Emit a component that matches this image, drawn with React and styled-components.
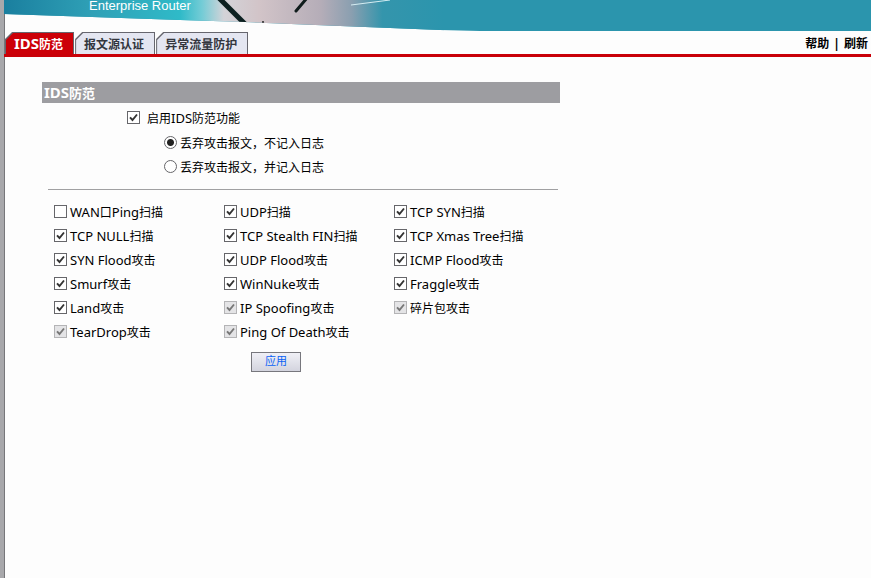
import React from 'react';
import styled, { createGlobalStyle } from 'styled-components';

const GlobalStyle = createGlobalStyle`
  * {
    box-sizing: border-box;
  }

  body {
    margin: 0;
    background: #fdfdfd;
    color: #000;
    font: 12px/16px 'Noto Sans', 'Noto Sans CJK SC', sans-serif;
  }
`;

const Page = styled.div`
  display: flex;
  flex-direction: column;
  min-height: 100vh;
  border-left: 4px solid #a8a8ab;
  box-shadow: inset 1px 0 #77777a;
`;

const Banner = styled.header`
  position: relative;
  height: 31px;
  padding-left: 85px;
`;

const BannerArt = styled.svg`
  position: absolute;
  top: 0;
  left: 0;
`;

const Product = styled.div`
  position: relative;
  color: #fff;
  font: 13px/12px 'Liberation Sans', sans-serif;
`;

const TabBar = styled.nav`
  display: flex;
  align-items: flex-end;
  height: 26px;
  padding-left: 1px;
  border-bottom: 3px solid #c90008;
`;

const TabShape = styled.button`
  position: relative;
  height: 22px;
  margin-right: 1px;
  padding: 3px 11px 0 9px;
  border: 0;
  background: none;
  color: ${(props) => (props.$active ? '#fff' : '#33363e')};
  font: bold 12px/16px 'Noto Sans', 'Noto Sans CJK SC', sans-serif;
  white-space: nowrap;

  &::before,
  &::after {
    content: '';
    position: absolute;
    inset: 0;
    z-index: -1;
    background: #66666e;
    clip-path: polygon(0 7px, 7px 0, 100% 0, 100% 100%, 0 100%);
  }

  &::after {
    inset: 1px 1px 0;
    background: ${(props) => (props.$active ? '#cc0008' : '#e4e6f1')};
  }
`;

const Links = styled.div`
  display: flex;
  gap: 4px;
  margin-left: auto;
  padding: 0 3px 2px 0;
  font-weight: bold;

  a {
    color: #000;
    text-decoration: none;
  }
`;

const Form = styled.form`
  width: 100%;
  max-width: 556px;
  padding: 25px 0 0 38px;
`;

const Title = styled.h1`
  margin: 0;
  padding: 3px 2px 2px;
  background: #9d9da1;
  color: #fff;
  font-size: 13px;
  line-height: 16px;
`;

const Latin = styled.span`
  font-size: ${(props) => (props.$large ? 15 : 13)}px;
  line-height: 1px;
`;

const Label = styled.label`
  display: flex;
  align-items: center;
  gap: ${(props) => props.$gap || 3}px;
  height: 24px;
  padding-top: 1px;
  white-space: nowrap;
`;

const Modes = styled.div`
  padding: 3px 0 10px 85px;
`;

const Choices = styled.div`
  padding: 1px 0 0 37px;
`;

const Box = styled.input`
  appearance: none;
  flex: none;
  width: 13px;
  height: 13px;
  margin: 0 0 2px;
  border: 1px solid #66666a;
  border-radius: ${(props) => (props.type === 'radio' ? '50%' : 0)};
  background: #fff;

  &[type='checkbox']:checked {
    background: #fff
      url("data:image/svg+xml,%3Csvg xmlns='http://www.w3.org/2000/svg' viewBox='0 0 11 11'%3E%3Cpath d='M2 5.3L4.5 8L9 2.5' fill='none' stroke='%23333' stroke-width='1.9'/%3E%3C/svg%3E");
  }

  &[type='radio']:checked {
    background: radial-gradient(circle, #222 3px, #fff 4px);
  }

  &:disabled {
    border-color: #b4b4b6;
  }

  &[type='checkbox']:disabled:checked {
    background: #e4e4e6
      url("data:image/svg+xml,%3Csvg xmlns='http://www.w3.org/2000/svg' viewBox='0 0 11 11'%3E%3Cpath d='M2 5.3L4.5 8L9 2.5' fill='none' stroke='%23777' stroke-width='1.9'/%3E%3C/svg%3E");
  }
`;

const Attacks = styled.div`
  display: grid;
  grid-template-columns: 1fr 1fr 1fr;
  column-gap: 6px;
  margin: 0 2px 0 6px;
  padding: 10px 0 0 6px;
  border-top: 1px solid #a0a0a2;
`;

const Actions = styled.div`
  display: flex;
  justify-content: center;
  padding: 8px 50px 0 0;
`;

const Apply = styled.button`
  width: 50px;
  height: 20px;
  padding: 0 0 2px;
  border: 1px solid #77777d;
  background: linear-gradient(#f0f0f6, #d3d4de);
  color: #0a62f5;
  font: 11px/16px 'Noto Sans', 'Noto Sans CJK SC', sans-serif;
`;

const attacks = [
  ['WAN口Ping扫描', false],
  ['UDP扫描', true],
  ['TCP SYN扫描', true],
  ['TCP NULL扫描', true],
  ['TCP Stealth FIN扫描', true],
  ['TCP Xmas Tree扫描', true],
  ['SYN Flood攻击', true],
  ['UDP Flood攻击', true],
  ['ICMP Flood攻击', true],
  ['Smurf攻击', true],
  ['WinNuke攻击', true],
  ['Fraggle攻击', true],
  ['Land攻击', true],
  ['IP Spoofing攻击', true, true],
  ['碎片包攻击', true, true],
  ['TearDrop攻击', true, true],
  ['Ping Of Death攻击', true, true],
];

// Latin runs are set larger than the Chinese around them
const Mixed = ({ text, large }) => (
  <span>
    {text.split(/([A-Za-z ]+)/).map((part, i) =>
      i % 2 ? (
        <Latin key={i} $large={large}>
          {part}
        </Latin>
      ) : (
        part
      )
    )}
  </span>
);

const Art = () => (
  <BannerArt width='100%' height='31' aria-hidden='true'>
    <defs>
      <linearGradient id='sky' gradientUnits='userSpaceOnUse' x1='0' x2='440' y1='0' y2='0'>
        <stop offset='0' stopColor='#1a7f9f' />
        <stop offset='0.2' stopColor='#2fa0b6' />
        <stop offset='0.4' stopColor='#2fbac8' />
        <stop offset='0.45' stopColor='#74ccd6' />
        <stop offset='0.5' stopColor='#d3d3d8' />
        <stop offset='0.58' stopColor='#d2c4c8' />
        <stop offset='0.72' stopColor='#b5adb8' />
        <stop offset='0.79' stopColor='#8a9fb0' />
        <stop offset='0.86' stopColor='#3495ac' />
        <stop offset='1' stopColor='#2b95ad' />
      </linearGradient>
      <clipPath id='edge'>
        <path d='M0 0H4000V31H476L436 30L336 26L241 22L176 20L0 14Z' />
      </clipPath>
    </defs>
    <g clipPath='url(#edge)'>
      <rect width='100%' height='31' fill='#2b95ad' />
      <rect width='440' height='31' fill='url(#sky)' />
      <path d='M214 -3L242 25' stroke='#0c2020' strokeWidth='5' />
      <path d='M303 -2L292 11' stroke='#101c1c' strokeWidth='3' strokeLinecap='round' />
      <circle cx='259' cy='22' r='1' fill='#222' />
      <path d='M347 5L386 0' stroke='#d5edf2' strokeWidth='1' />
    </g>
  </BannerArt>
);

const Tab = ({ text, active }) => (
  <TabShape type='button' $active={active}>
    <Mixed text={text} large />
  </TabShape>
);

const App = () => (
  <>
    <GlobalStyle />
    <Page>
      <Banner>
        <Art />
        <Product>Enterprise Router</Product>
      </Banner>
      <TabBar>
        <Tab text='IDS防范' active />
        <Tab text='报文源认证' />
        <Tab text='异常流量防护' />
        <Links>
          <a href='#help'>帮助</a>|<a href='#refresh'>刷新</a>
        </Links>
      </TabBar>
      <Form onSubmit={(e) => e.preventDefault()}>
        <Title>
          <Mixed text='IDS防范' large />
        </Title>
        <Modes>
          <Label $gap={7}>
            <Box type='checkbox' defaultChecked />
            <Mixed text='启用IDS防范功能' />
          </Label>
          <Choices>
            <Label>
              <Box type='radio' name='log' defaultChecked />
              <Mixed text='丢弃攻击报文，不记入日志' />
            </Label>
            <Label>
              <Box type='radio' name='log' />
              <Mixed text='丢弃攻击报文，并记入日志' />
            </Label>
          </Choices>
        </Modes>
        <Attacks>
          {attacks.map(([name, checked, disabled]) => (
            <Label key={name}>
              <Box type='checkbox' defaultChecked={checked} disabled={disabled} />
              <Mixed text={name} />
            </Label>
          ))}
        </Attacks>
        <Actions>
          <Apply type='submit'>应用</Apply>
        </Actions>
      </Form>
    </Page>
  </>
);

export default App;
